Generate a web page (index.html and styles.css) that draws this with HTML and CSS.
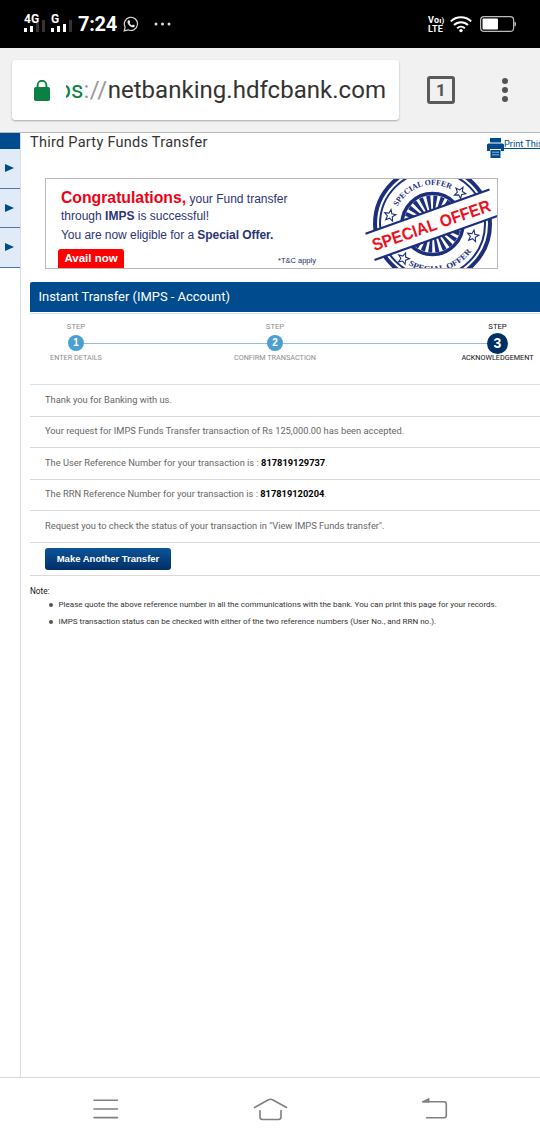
FILE: index.html
```html
<!DOCTYPE html>
<html lang="en">
<head>
<meta charset="utf-8">
<title>Third Party Funds Transfer</title>
<link rel="stylesheet" href="styles.css">
</head>
<body>
<div class="phone">
  <header class="status">
    <div class="signal">
      <span class="net">4G</span>
      <svg width="22" height="12" viewBox="0 0 22 12"><path fill="#fff" d="M0 8h3v4H0zM6 6h3v6H6z"/><path fill="#333" d="M12 3h3v9h-3zM18 0h3v12h-3z"/></svg>
    </div>
    <div class="signal second">
      <span class="net">G</span>
      <svg width="22" height="12" viewBox="0 0 22 12"><path fill="#fff" d="M0 8h3v4H0zM6 6h3v6H6zM12 4h3v8h-3z"/><path fill="#333" d="M18 0h3v12h-3z"/></svg>
    </div>
    <span class="clock">7:24</span>
    <svg class="chat" width="16" height="16" viewBox="0 0 16 16"><path d="M1.2 14.8l1-3.6A6.6 6.6 0 1 1 5 13.8z" fill="none" stroke="#ddd" stroke-width="1.2"/><path d="M5.4 4.2l1.1 0 .8 1.900-.8 1c.6 1.100 1.400 1.800 2.500 2.300l1-.9 1.900.9c0 1.300-.9 1.900-2 1.900C7.400 11 4.600 8.200 4.500 5.900c0-.7.3-1.300.9-1.700z" fill="#eee"/></svg>
    <svg class="more" width="18" height="4" viewBox="0 0 18 4" fill="#ddd"><circle cx="2" cy="2" r="1.500"/><circle cx="8.500" cy="2" r="1.500"/><circle cx="15" cy="2" r="1.500"/></svg>
    <div class="right">
      <div class="volte"><span>Vo<i>ı)</i></span><span>LTE</span></div>
      <svg width="22" height="17" viewBox="0 0 22 17" fill="none" stroke="#fff" stroke-width="2"><path d="M.8 5.400a14.500 14.500 0 0 1 20.400 0M4 9a10 10 0 0 1 14 0M7.200 12.200a5.500 5.500 0 0 1 7.600 0"/><circle cx="11" cy="14.600" r="1.700" fill="#fff" stroke="none"/></svg>
      <svg class="battery" width="36" height="16" viewBox="0 0 36 16"><rect x=".6" y=".6" width="33" height="14.800" rx="3.500" fill="none" stroke="#bbb" stroke-width="1.200"/><rect x="2.500" y="2.500" width="15.500" height="11" rx="1" fill="#fff"/><path d="M34.500 5.500q1.500 0 1.500 2.500t-1.500 2.500z" fill="#ccc"/></svg>
    </div>
  </header>

  <div class="toolbar">
    <div class="omnibox">
      <svg width="16" height="21" viewBox="0 0 16 21"><path d="M3.600 8V5.200a4.400 4.400 0 0 1 8.800 0V8" fill="none" stroke="#0b8043" stroke-width="1.900"/><rect x="0" y="7" width="16" height="14" rx="1.800" fill="#0b8043"/></svg>
      <div class="url"><span class="scheme">ps</span><span class="sep">://</span><span class="host">netbanking.hdfcbank.com</span></div>
    </div>
    <div class="tabs">1</div>
    <svg class="menu" width="6" height="24" viewBox="0 0 6 24" fill="#545454"><circle cx="3" cy="3" r="3"/><circle cx="3" cy="12" r="3"/><circle cx="3" cy="21" r="3"/></svg>
  </div>

  <div class="page">
    <aside class="side">
      <div class="side-top"></div>
      <div class="side-item"><svg width="9" height="8" viewBox="0 0 9 8"><path d="M0 0l9 4-9 4z" fill="#004b8d"/></svg></div>
      <div class="side-item"><svg width="9" height="8" viewBox="0 0 9 8"><path d="M0 0l9 4-9 4z" fill="#004b8d"/></svg></div>
      <div class="side-item"><svg width="9" height="8" viewBox="0 0 9 8"><path d="M0 0l9 4-9 4z" fill="#004b8d"/></svg></div>
    </aside>
    <main class="main">
      <div class="heading">
        <h1>Third Party Funds Transfer</h1>
        <a class="print"><svg width="17" height="20" viewBox="0 0 17 20" fill="#004b8d"><path d="M3 0h11v4.500H3zM1.500 5.500h14a1.500 1.500 0 0 1 1.500 1.500v6h-3v-2H3v2H0V7a1.500 1.500 0 0 1 1.500-1.500z"/><path d="M3.500 12h10v8h-10z"/><path d="M5 14.200h7M5 16.800h7" stroke="#a9c4dd" stroke-width=".9"/></svg><span>Print This</span></a>
      </div>

      <section class="banner">
        <div class="offer">
          <p class="l1"><b>Congratulations,</b> <span>your Fund transfer</span></p>
          <p class="l2">through <b>IMPS</b> is successful!</p>
          <p class="l3">You are now eligible for a <b>Special Offer.</b></p>
          <div class="foot"><span class="avail">Avail now</span><span class="tc">*T&amp;C apply</span></div>
        </div>
        <svg class="stamp" width="134" height="89" viewBox="363 179 134 89">
          <defs>
            <path id="arcTop" d="M393.500 224a39 39 0 0 1 78 0"/>
            <path id="arcBottom" d="M385 224a47.500 47.500 0 0 0 95 0"/>
            <path id="star" d="M0-6l1.500 3.900 4.200.3-3.200 2.700 1 4.100L0 2.700l-3.500 2.300 1-4.100-3.200-2.700 4.200-.3z"/>
          </defs>
          <g fill="none" stroke="#1b2f7d">
            <circle cx="432.500" cy="224" r="57.500" stroke-width="4"/>
            <circle cx="432.500" cy="224" r="52.500" stroke-width="2"/>
            <circle cx="432.500" cy="224" r="30.500" stroke-width="3.500"/>
            <circle cx="432.500" cy="224" r="21" stroke-width="15" stroke-dasharray="3.100 2.400"/>
            <g stroke-width="1.100" fill="#fff">
              <use href="#star" transform="translate(390 215.500) rotate(10)"/>
              <use href="#star" transform="translate(460 192.500) rotate(30)"/>
              <use href="#star" transform="translate(473 236) rotate(10)"/>
              <use href="#star" transform="translate(403.500 258.500) rotate(20)"/>
            </g>
          </g>
          <g class="ring-text">
            <text><textPath href="#arcTop" startOffset="18" textLength="62" lengthAdjust="spacingAndGlyphs">SPECIAL OFFER</textPath></text>
            <text><textPath href="#arcBottom" startOffset="49" textLength="71" lengthAdjust="spacingAndGlyphs">SPECIAL OFFER</textPath></text>
          </g>
          <path d="M365.500 233.800L489.500 189.500 497.500 216 374.500 260z" fill="#fff"/>
          <path d="M365.500 233.800L489.500 189.500M374.500 260L498 215.800" stroke="#1b2f7d" stroke-width="2.200"/>
          <text class="stamp-text" x="0" y="0" textLength="124" lengthAdjust="spacingAndGlyphs" transform="translate(374.500 251) rotate(-19)">SPECIAL OFFER</text>
        </svg>
      </section>

      <h2 class="bar">Instant Transfer (IMPS - Account)</h2>
      <div class="steps">
        <div class="rail"></div>
        <div class="step"><span class="cap">STEP</span><b>1</b><span>ENTER DETAILS</span></div>
        <div class="step"><span class="cap">STEP</span><b>2</b><span>CONFIRM TRANSACTION</span></div>
        <div class="step current"><span class="cap">STEP</span><b>3</b><span>ACKNOWLEDGEMENT</span></div>
      </div>
      <div class="rows">
        <div class="row"><span>Thank you for Banking with us.</span></div>
        <div class="row"><span>Your request for IMPS Funds Transfer transaction of Rs 125,000.00 has been accepted.</span></div>
        <div class="row"><span>The User Reference Number for your transaction is : <b>817819129737</b>.</span></div>
        <div class="row"><span>The RRN Reference Number for your transaction is : <b>817819120204</b>.</span></div>
        <div class="row"><span>Request you to check the status of your transaction in "View IMPS Funds transfer".</span></div>
        <div class="row last"><button class="again">Make Another Transfer</button></div>
      </div>
      <div class="note">
        <p>Note:</p>
        <ul>
          <li><span>Please quote the above reference number in all the communications with the bank. You can print this page for your records.</span></li>
          <li><span>IMPS transaction status can be checked with either of the two reference numbers (User No., and RRN no.).</span></li>
        </ul>
      </div>
    </main>
  </div>

  <nav class="nav">
    <svg width="540" height="62" viewBox="0 1078 540 62" fill="none" stroke="#808080" stroke-width="1.600" stroke-linecap="round" stroke-linejoin="round">
      <path d="M94 1100.200h23.500M94 1109h23.500M94 1117.600h23.500"/>
      <path d="M254.500 1107.500L268 1100q2.500-1.500 5 0L286.500 1107.500M260 1110.500v6.500q0 2.500 2.500 2.500h16q2.500 0 2.500-2.500v-6.500"/>
      <path d="M423 1101.700h21q2.300 0 2.300 2.300v11.500q0 2.300-2.300 2.300H426.500"/><path d="M422.500 1101.700l6.500-3.200v3.200z" fill="#808080" stroke-width="1"/>
    </svg>
  </nav>
</div>
</body>
</html>
```
FILE: styles.css
```css
* { box-sizing: border-box; }
body { margin: 0; font-family: Roboto, "Liberation Sans", sans-serif; background: #fff; }
p, h1, h2, ul { margin: 0; padding: 0; font-weight: 400; }
svg { display: block; flex: none; }
.phone { width: 540px; height: 1140px; overflow: hidden; display: flex; flex-direction: column; }

.status { height: 48px; flex: none; background: #000; color: #fff; display: flex; align-items: center; padding: 0 24px; }
.signal { width: 27px; height: 20px; display: grid; padding-top: 2px; }
.signal > * { grid-area: 1 / 1; }
.signal svg { align-self: end; margin-bottom: 2px; }
.signal .net { font-size: 12px; line-height: 10px; font-weight: 700; z-index: 1; margin-top: -2px; }
.clock { font-size: 20px; line-height: 24px; font-weight: 700; letter-spacing: -.3px; }
.chat { margin-left: 6px; }
.more { margin-left: 15px; }
.right { margin-left: auto; display: flex; align-items: center; }
.volte { width: 22px; display: flex; flex-direction: column; font-size: 9px; line-height: 8px; font-weight: 700; letter-spacing: .2px; }
.volte i { font-style: normal; font-size: 8px; }
.battery { margin-left: 8px; }

.toolbar { height: 85px; flex: none; background: #f1f1f1; border-bottom: 1px solid #b9b9b9; display: flex; align-items: center; padding: 0 32px 0 12px; }
.omnibox { width: 387px; height: 60px; background: #fff; border-radius: 3px; box-shadow: 0 1px 2px rgba(0,0,0,.3); display: flex; align-items: center; padding: 0 13px 0 22px; }
.url { margin-left: 16px; width: 320px; overflow: hidden; display: flex; justify-content: flex-end; font-size: 24px; line-height: 36px; white-space: nowrap; }
.host { color: #333; letter-spacing: .03px; }
.scheme { color: #0b8043; }
.sep { color: #999; letter-spacing: .4px; }
.tabs { margin-left: 28px; width: 28px; height: 28px; border: 3px solid #5a5a5a; border-radius: 3px; color: #545454; font-size: 17px; line-height: 22px; font-weight: 700; text-align: center; }
.menu { margin-left: auto; }

.page { flex: 1; display: flex; min-height: 0; }
.side { width: 21px; flex: none; border-right: 1px solid #d9dce0; }
.side-top { height: 16px; background: #004b8d; }
.side-item { height: 39.500px; background: #e1ebf7; border-bottom: 1px solid #4b78a8; display: flex; align-items: center; padding-left: 5px; }
.main { flex: 1; min-width: 0; padding-left: 9px; }
.heading { height: 45px; display: flex; justify-content: space-between; }
.heading h1 { font-size: 14.500px; line-height: 19px; color: #333; letter-spacing: .27px; }
.print { width: 53px; overflow: hidden; display: flex; color: #004b8d; font-size: 9.200px; line-height: 12px; text-decoration: underline; white-space: nowrap; padding-top: 5px; }

.banner { width: 453px; height: 91px; margin-left: 15px; border: 1px solid #b8b8b8; display: flex; justify-content: space-between; font-family: "Liberation Sans", sans-serif; color: #2c3478; }
.offer { padding-left: 15px; width: 290px; font-size: 12px; white-space: nowrap; display: flex; flex-direction: column; }
.offer p { line-height: 19px; height: 19px; }
.offer .l1 { margin-top: 9px; }
.l1 b { font-size: 15.750px; color: #f00014; }
.l3 { letter-spacing: -.05px; }
.foot { display: flex; margin-top: auto; height: 19px; margin-left: -3px; }
.avail { width: 66px; height: 19px; background: #f00; color: #fff; font-weight: 700; font-size: 11.500px; line-height: 19px; text-align: center; border-radius: 3px 3px 0 0; }
.tc { margin-left: 154px; font-size: 7.500px; line-height: 23px; color: #222a66; }
.ring-text { font: 700 8px "Liberation Serif", serif; fill: #1b2f7d; }
.stamp-text { font: 700 17px "Liberation Sans", sans-serif; fill: #ed1020; }

.bar { margin-top: 13px; height: 30px; background: #004b8d; color: #fff; border-radius: 2px 0 0 0; font-size: 12.950px; line-height: 29px; padding-left: 8.500px; }
.steps { height: 72px; margin-top: 1px; border-top: 1px solid #d3e0ee; border-bottom: 1px solid #e0e0e0; display: grid; grid-template-columns: 92px 306px 139px; position: relative; }
.rail { position: absolute; left: 46px; top: 29px; width: 421px; height: 1px; background: #92bddb; }
.step { position: relative; display: flex; flex-direction: column; align-items: center; color: #8c8c8c; font-size: 7.250px; line-height: 10px; padding-top: 8px; white-space: nowrap; }
.step .cap { font-size: 7.700px; }
.step b { width: 16px; height: 16px; margin: 3px 0 2px; border-radius: 50%; background: #4b9fd2; color: #fff; font: 700 10px/16px "Liberation Sans", sans-serif; text-align: center; }
.step.current { color: #111; }
.current b { width: 21px; height: 21px; margin: 1px 0 -1px; background: #002f66; font-size: 14px; line-height: 21px; }

.row { height: 31.500px; border-bottom: 1px solid #dadada; padding: 0 0 2px 15px; display: flex; align-items: center; font-size: 9.320px; color: #666; white-space: nowrap; }
.row b { color: #000; }
.row.last { height: 33.500px; padding-bottom: 0; }
.again { width: 126px; height: 22px; border: 0; border-radius: 3px; padding: 0; background: linear-gradient(#0d5499, #002f66); color: #fff; font: 700 9.500px/22px "Liberation Sans", sans-serif; }
.note { padding-top: 9px; font-size: 8.040px; color: #333; line-height: 12px; white-space: nowrap; }
.note p { color: #111; font-size: 8.200px; }
.note ul { list-style: none; }
.note li { height: 16.750px; line-height: 16px; display: flex; align-items: center; padding-left: 18.500px; }
.note li::before { content: ""; width: 4px; height: 4px; border-radius: 50%; background: #555; margin-right: 6px; }

.nav { height: 63px; flex: none; background: #fff; border-top: 1px solid #d8d8d8; }
```
